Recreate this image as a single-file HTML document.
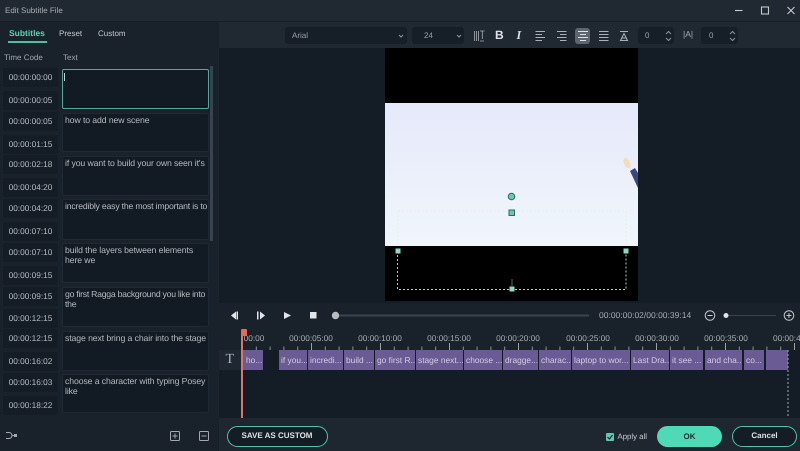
<!DOCTYPE html>
<html><head><meta charset="utf-8"><style>
*{box-sizing:border-box;text-rendering:geometricPrecision}
html,body{margin:0;padding:0;width:800px;height:451px;overflow:hidden;background:#19212b;font-family:"Liberation Sans",sans-serif;color:#c3c8cc}
.a{position:absolute}
.t{position:absolute;white-space:nowrap;font-size:8px;line-height:11px}
.tc{position:absolute;left:3px;width:55px;height:19px;background:#141c26;border-radius:2px;font-size:8.3px;line-height:19px;text-align:center;color:#b4b9bd}
.box{position:absolute;left:62px;width:147px;background:#121a24;border:1px solid #1f2934;border-radius:2px;padding:2px 0 0 2px;font-size:8.7px;letter-spacing:-.1px;line-height:9.5px;color:#b5babd;white-space:nowrap;overflow:hidden}
.clip{position:absolute;top:350px;height:20px;background:#6b5b95;color:#d0cde0;font-size:8.4px;line-height:20px;padding-left:2px;overflow:hidden;white-space:nowrap}
.r{position:absolute;top:333px;width:60px;text-align:center;font-size:8.3px;line-height:10px;color:#a6abb0;white-space:nowrap}
.dd{position:absolute;top:27px;height:17px;background:#161e28;border-radius:3px;font-size:8px;line-height:17px;color:#9aa0a5}
#w{position:absolute;left:0;top:0;width:800px;height:451px;overflow:hidden;filter:blur(.3px)}
</style></head><body><div id="w">

<div class="a" style="left:0;top:0;width:800px;height:22px;background:#202832;border-bottom:1px solid #171e27"></div>
<div class="t" style="left:5px;top:5px;color:#a8adb1">Edit Subtitle File</div>
<svg class="a" style="left:0;top:0" width="800" height="22"><g stroke="#c5c9cc" fill="none" stroke-width="1.1"><path d="M735 10.500h7.500"/><rect x="761.500" y="7" width="7" height="7"/><path d="M787.500 7l7 7M794.500 7l-7 7"/></g></svg>

<!-- left panel -->
<div class="a" style="left:0;top:22px;width:219px;height:429px;background:#19212b"></div>
<div class="t" style="left:9px;top:27.500px;color:#5fd0b2;font-weight:bold;font-size:8.500px">Subtitles</div>
<div class="a" style="left:8px;top:41px;width:39px;height:1.500px;background:#4fbfa3"></div>
<div class="t" style="left:59px;top:27.500px">Preset</div>
<div class="t" style="left:98px;top:27.500px">Custom</div>
<div class="t" style="left:4px;top:52px;color:#a2a7ab">Time Code</div>
<div class="t" style="left:63px;top:52px;color:#a2a7ab">Text</div>
<div class="a" style="left:210px;top:66px;width:3px;height:175px;background:#3a434d"></div>

<div class="tc" style="top:68px">00:00:00:00</div><div class="tc" style="top:91px">00:00:00:05</div>
<div class="tc" style="top:112px">00:00:00:05</div><div class="tc" style="top:135px">00:00:01:15</div>
<div class="tc" style="top:155px">00:00:02:18</div><div class="tc" style="top:178px">00:00:04:20</div>
<div class="tc" style="top:199px">00:00:04:20</div><div class="tc" style="top:222px">00:00:07:10</div>
<div class="tc" style="top:243px">00:00:07:10</div><div class="tc" style="top:266px">00:00:09:15</div>
<div class="tc" style="top:287px">00:00:09:15</div><div class="tc" style="top:309px">00:00:12:15</div>
<div class="tc" style="top:329px">00:00:12:15</div><div class="tc" style="top:352px">00:00:16:02</div>
<div class="tc" style="top:373px">00:00:16:03</div><div class="tc" style="top:396px">00:00:18:22</div>

<div class="box" style="top:69px;height:40px;border-color:#5aa699"><span class="a" style="left:1px;top:3px;width:1px;height:8px;background:#c8ccd0"></span></div>
<div class="box" style="top:113px;height:39px">how to add new scene</div>
<div class="box" style="top:156px;height:40px">if you want to build your own seen it's</div>
<div class="box" style="top:199px;height:41px;letter-spacing:-.2px">incredibly easy the most important is to</div>
<div class="box" style="top:243px;height:40px">build the layers between elements<br>here we</div>
<div class="box" style="top:287px;height:40px;letter-spacing:-.26px">go first Ragga background you like into<br>the</div>
<div class="box" style="top:331px;height:40px">stage next bring a chair into the stage</div>
<div class="box" style="top:374px;height:39px">choose a character with typing Posey<br>like</div>

<svg class="a" style="left:0;top:425px" width="219" height="22"><g fill="none" stroke="#a3a8ac" stroke-width="1"><path d="M6 7.500h3a3 3 0 0 1 0 6H6"/><path d="M12 10.500h2"/><rect x="14" y="9" width="3" height="3" fill="#a3a8ac" stroke="none"/><rect x="170.500" y="6.500" width="9" height="9" rx="1"/><path d="M172.500 11h5M175 8.500v5"/><rect x="199.500" y="6.500" width="9" height="9" rx="1"/><path d="M201.500 11h5"/></g></svg>

<!-- toolbar -->
<div class="a" style="left:219px;top:22px;width:581px;height:26px;background:#202832"></div>
<div class="dd" style="left:285px;width:122px;padding-left:7px">Arial<svg class="a" style="left:113px;top:7px" width="6" height="4"><path d="M1 1l2 2 2-2" stroke="#8e949a" fill="none"/></svg></div>
<div class="dd" style="left:412px;width:52px;padding-left:12px">24<svg class="a" style="left:44px;top:7px" width="6" height="4"><path d="M1 1l2 2 2-2" stroke="#8e949a" fill="none"/></svg></div>
<div class="dd" style="left:638px;width:36px;padding-left:7px">0<svg class="a" style="left:27px;top:3px" width="7" height="12"><path d="M1 4l2.500-2.500L6 4M1 8l2.500 2.500L6 8" stroke="#8e949a" fill="none"/></svg></div>
<div class="dd" style="left:701px;width:37px;padding-left:8px">0<svg class="a" style="left:28px;top:3px" width="7" height="12"><path d="M1 4l2.500-2.500L6 4M1 8l2.500 2.500L6 8" stroke="#8e949a" fill="none"/></svg></div>
<div class="a" style="left:575px;top:27.500px;width:15px;height:16px;background:#5d6670;border-radius:3px"></div>
<svg class="a" style="left:470px;top:22px" width="260" height="26"><g fill="none" stroke-width="1"><path d="M4.500 9v10M6.500 9v10M8.500 9v10M10 9h4.500M12.300 9v8M10 19h4" stroke="#a9aeb2" stroke-width=".8"/><path d="M65.500 9.500h9.500M65.500 12.500h6.500M65.500 15.500h9.500M65.500 18.500h6.500" stroke="#aab0b4"/><path d="M87 9.500h9.500M90 12.500h6.500M87 15.500h9.500M90 18.500h6.500" stroke="#aab0b4"/><path d="M108 9.500h10M110 12.500h6M108 15.500h10M110 18.500h6" stroke="#dfe2e4"/><path d="M129 9.500h9.500M129 12.500h9.500M129 15.500h9.500M129 18.500h9.500" stroke="#aab0b4"/><path d="M150 9.500h8M154 11.500l-3.500 7h7zM152 16h4" stroke="#aab0b4"/></g></svg>
<div class="a" style="left:495px;top:28px;font:bold 12px 'Liberation Sans',sans-serif;color:#dfe2e4">B</div>
<div class="a" style="left:516.500px;top:28px;font:italic bold 12px 'Liberation Serif',serif;color:#dfe2e4">I</div>
<div class="a" style="left:683px;top:29px;font-size:8.500px;color:#a6abaf">|A|</div>

<!-- preview -->
<div class="a" style="left:219px;top:48px;width:581px;height:255px;background:#141c26"></div>
<div class="a" style="left:385px;top:48px;width:253px;height:253px;background:#000"></div>
<div class="a" style="left:385px;top:103px;width:253px;height:143px;background:linear-gradient(#e6e9fb,#f0f6fb)"></div>
<svg class="a" style="left:385px;top:103px" width="253" height="198"><ellipse cx="242" cy="60" rx="3" ry="5.500" transform="rotate(-25 242 60)" fill="#f3dcb8"/><path d="M245 68l5-3 3 5v15z" fill="#39477c"/>
<path d="M13 108H241M13 108V143M241 108V143" fill="none" stroke="#dce6ee" stroke-dasharray="2 2" opacity=".45"/>
<path d="M12.500 148V186.500H241V148" fill="none" stroke="#bfc4c4" stroke-dasharray="2 2"/>
<circle cx="126.500" cy="93.500" r="3.300" fill="#6fc5ae" stroke="#2e6a62"/>
<rect x="124" y="107" width="5.500" height="5.500" fill="#6fc5ae" stroke="#2e6a62"/>
<rect x="10.500" y="145.500" width="5" height="5" fill="#8fdcc4"/><rect x="238.500" y="145.500" width="5" height="5" fill="#8fdcc4"/><path d="M127 176v7" stroke="#50706c"/><rect x="124.500" y="183.500" width="5" height="5" fill="#8fdcc4"/></svg>

<!-- controls -->
<div class="a" style="left:219px;top:303px;width:581px;height:115px;background:#19212b"></div>
<svg class="a" style="left:219px;top:303px" width="581" height="25"><g fill="#e2e5e7"><path d="M12 12.500l5-4v8zM17.500 8.500h1.500v8h-1.500z"/><path d="M38 8.500h1.500v8H38zM41 8.500l5 4-5 4z"/><path d="M65 9l7 3.500-7 3.500z"/><rect x="91" y="9" width="6.500" height="6.500"/></g>
<path d="M117 12.500H370" stroke="#3b444e" stroke-width="2"/><circle cx="116.500" cy="12.500" r="3.700" fill="#b8bcbe"/>
<g fill="none" stroke="#c5c9cc"><circle cx="491" cy="12.500" r="4.800"/><path d="M488.500 12.500h5"/><circle cx="570" cy="12.500" r="4.800"/><path d="M567.500 12.500h5M570 10v5"/></g>
<path d="M507 12.500H557" stroke="#3b444e"/><circle cx="507" cy="12.500" r="2.500" fill="#dfe2e4"/></svg>
<div class="t" style="left:599px;top:310px;font-size:8.500px;color:#a6abb0">00:00:00:02/00:00:39:14</div>

<!-- timeline -->
<div class="r" style="left:224px">00:00</div><div class="r" style="left:281px">00:00:05:00</div><div class="r" style="left:350px">00:00:10:00</div><div class="r" style="left:419px">00:00:15:00</div><div class="r" style="left:488px">00:00:20:00</div><div class="r" style="left:558px">00:00:25:00</div><div class="r" style="left:627px">00:00:30:00</div><div class="r" style="left:696px">00:00:35:00</div><div class="r" style="left:773px;width:27px;overflow:hidden;text-align:left">00:00:40:00</div>
<svg class="a" style="left:242px;top:340px" width="558" height="10"><defs><pattern id="m" x="0" width="13.800" height="10" patternUnits="userSpaceOnUse"><path d="M.5 6.500V10" stroke="#8d9399"/></pattern><pattern id="j" x="0" width="69" height="10" patternUnits="userSpaceOnUse"><path d="M.5 3V10" stroke="#9ba1a6"/></pattern></defs><rect width="558" height="10" fill="url(#m)"/><rect width="558" height="10" fill="url(#j)"/></svg>
<div class="a" style="left:219px;top:350px;width:24px;height:20px;background:#1f2832"></div>
<div class="a" style="left:225.500px;top:352px;font:14px 'Liberation Serif',serif;color:#aeb3b7">T</div>
<div class="a" style="left:219px;top:370px;width:581px;height:48px;background:#141c26"></div>
<div class="a" style="left:243px;top:350px;width:557px;height:20px;background:#141c26"></div>

<div class="clip" style="left:243px;width:20px;padding-left:3px">ho...</div>
<div class="clip" style="left:279px;width:28px">if you...</div>
<div class="clip" style="left:308px;width:35px">incredi...</div>
<div class="clip" style="left:344px;width:29.500px">build ...</div>
<div class="clip" style="left:375px;width:40px">go first R...</div>
<div class="clip" style="left:416px;width:47px">stage next...</div>
<div class="clip" style="left:464px;width:38px">choose ...</div>
<div class="clip" style="left:503px;width:35px">dragge...</div>
<div class="clip" style="left:539px;width:32px">charac...</div>
<div class="clip" style="left:572px;width:58px">laptop to wor...</div>
<div class="clip" style="left:631px;width:38px">Last Dra...</div>
<div class="clip" style="left:670px;width:33px">it see ...</div>
<div class="clip" style="left:705px;width:37px">and cha...</div>
<div class="clip" style="left:744px;width:20px">co...</div>
<div class="clip" style="left:766px;width:22px"></div>
<svg class="a" style="left:787px;top:350px" width="3" height="68"><path d="M1 0V68" stroke="#a0a6aa" stroke-dasharray="2 2"/></svg>
<div class="a" style="left:241px;top:335px;width:2px;height:83px;background:#d9766c"></div>
<div class="a" style="left:241px;top:329px;width:6px;height:7px;background:#e8685c;border-radius:1px"></div>

<!-- bottom -->
<div class="a" style="left:219px;top:418px;width:581px;height:33px;background:#1e2630"></div>
<div class="a" style="left:226.500px;top:426px;width:101px;height:21px;border:1.500px solid #55c2a9;border-radius:11px;background:#141c26;text-align:center;font-size:8px;font-weight:bold;line-height:18px;color:#dde0e2">SAVE AS CUSTOM</div>
<div class="a" style="left:605.500px;top:433px;width:8px;height:8px;background:#5fc9ae;border-radius:1px"></div>
<svg class="a" style="left:605.500px;top:433px" width="8" height="8"><path d="M1.500 4l2 2 3-4" stroke="#14302c" fill="none" stroke-width="1.200"/></svg>
<div class="t" style="left:617.500px;top:431px;font-size:7.800px;color:#c7cbce">Apply all</div>
<div class="a" style="left:657px;top:426px;width:65px;height:21px;border-radius:11px;background:#4fd9b6;text-align:center;font-size:8px;font-weight:bold;line-height:21px;color:#14302c">OK</div>
<div class="a" style="left:732px;top:426px;width:65px;height:21px;border:1.500px solid #55c2a9;border-radius:11px;background:#141c26;text-align:center;font-size:8px;font-weight:bold;line-height:18px;color:#dde0e2">Cancel</div>
</div></body></html>
